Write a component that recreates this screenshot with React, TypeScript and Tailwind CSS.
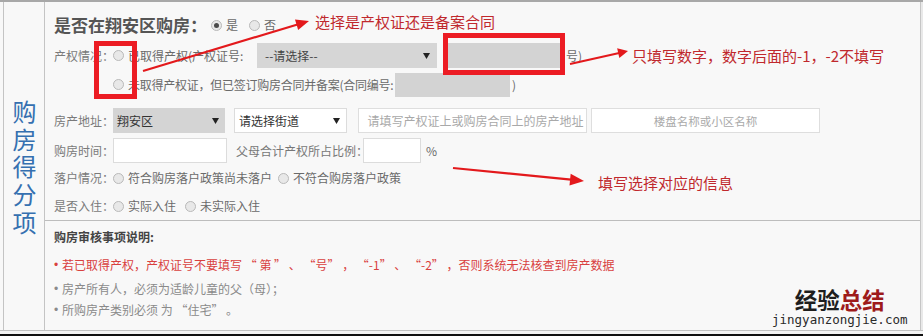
import React from "react";

const Radio = ({ checked = false, className = "" }: { checked?: boolean; className?: string }) => (
  <span
    className={`inline-flex items-center justify-center w-[11px] h-[11px] rounded-full border border-[#b9b9b9] bg-[#e8e8e8] shrink-0 ${className}`}
  >
    {checked && <span className="w-[5px] h-[5px] rounded-full bg-[#4a4a4a]" />}
  </span>
);

const Caret = () => (
  <svg width="7" height="6" viewBox="0 0 7 6" className="shrink-0">
    <polygon points="0,0 7,0 3.5,6" fill="#222" />
  </svg>
);

function arrowHead(x1: number, y1: number, x2: number, y2: number, len: number, wid: number) {
  const dx = x2 - x1;
  const dy = y2 - y1;
  const d = Math.sqrt(dx * dx + dy * dy);
  const ux = dx / d;
  const uy = dy / d;
  const bx = x2 - ux * len;
  const by = y2 - uy * len;
  const px = -uy * (wid / 2);
  const py = ux * (wid / 2);
  return {
    line: { x1, y1, x2: bx + ux * 1, y2: by + uy * 1 },
    points: `${x2},${y2} ${bx + px},${by + py} ${bx - px},${by - py}`,
  };
}

const Arrow = ({ x1, y1, x2, y2, len, wid, sw }: { x1: number; y1: number; x2: number; y2: number; len: number; wid: number; sw: number }) => {
  const a = arrowHead(x1, y1, x2, y2, len, wid);
  return (
    <g>
      <line x1={a.line.x1} y1={a.line.y1} x2={a.line.x2} y2={a.line.y2} stroke="#e3191c" strokeWidth={sw} />
      <polygon points={a.points} fill="#e3191c" />
    </g>
  );
};

const label = "w-[59px] shrink-0 text-[12px] leading-[18px] text-[#7a7a7a] whitespace-nowrap";
const opt = "shrink-0 text-[12px] leading-[18px] text-[#6a6a6a] whitespace-nowrap";

const Bullet = () => (
  <span className="shrink-0 w-[8px] font-[family-name:'Liberation_Sans',sans-serif]">•</span>
);

export default function App() {
  return (
    <div className="relative w-[923px] h-[336px] flex flex-col bg-[#f8f8f8] overflow-hidden font-[family-name:'Noto_Sans_CJK_SC','Noto_Sans',sans-serif]">
      <div className="h-[2px] bg-[#a8a8a8] shrink-0" />
      <div className="h-[328px] flex shrink-0">
        <div className="w-[3px] shrink-0" />
        <div className="w-[42px] shrink-0 border-l border-r border-[#c4c4c4] flex items-center justify-center pt-[6px]">
          <span className="[writing-mode:vertical-rl] text-[24px] leading-[24px] tracking-[3.6px] text-[#3570b0]">购房得分项</span>
        </div>
        <div className="flex-1 flex flex-col">
          <div className="pl-[9px] flex flex-col">
            {/* row 1 */}
            <div className="mt-[11px] h-[24px] flex items-center">
              <span className="text-[17px] leading-[24px] font-bold text-[#555] whitespace-nowrap">是否在翔安区购房：</span>
              <Radio checked className="ml-[4px]" />
              <span className={`${opt} ml-[4px]`}>是</span>
              <Radio className="ml-[11px]" />
              <span className={`${opt} ml-[4px]`}>否</span>
            </div>
            {/* row 2 */}
            <div className="mt-[6px] h-[25px] flex items-center">
              <span className={label}>产权情况：</span>
              <Radio />
              <span className={`${opt} ml-[4px] w-[129px]`}>已取得产权(产权证号:</span>
              <div className="w-[180px] h-[25px] bg-[#d6d6d6] flex items-center justify-between pl-[8px] pr-[7px]">
                <span className="text-[12px] leading-[18px] text-[#444]">--请选择--</span>
                <Caret />
              </div>
              <div className="ml-[8px] w-[115px] h-[25px] bg-[#d3d3d3]" />
              <span className={`${opt} ml-[6px]`}>号)</span>
            </div>
            {/* row 3 */}
            <div className="mt-[4px] h-[25px] flex items-center pl-[59px]">
              <Radio />
              <span className={`${opt} ml-[4px] w-[267px] tracking-[-0.25px]`}>未取得产权证，但已签订购房合同并备案(合同编号:</span>
              <div className="w-[115px] h-[24px] bg-[#d3d3d3]" />
              <span className={`${opt} ml-[2px]`}>)</span>
            </div>
            {/* row 4 */}
            <div className="mt-[11px] h-[25px] flex items-center">
              <span className={label}>房产地址：</span>
              <div className="w-[112px] h-[25px] bg-[#d4d4d4] flex items-center justify-between pl-[4px] pr-[6px]">
                <span className="text-[12px] leading-[18px] text-[#333]">翔安区</span>
                <Caret />
              </div>
              <div className="ml-[9px] w-[113px] h-[25px] bg-white border border-[#dcdcdc] flex items-center justify-between pl-[4px] pr-[6px]">
                <span className="text-[12px] leading-[18px] text-[#333]">请选择街道</span>
                <Caret />
              </div>
              <div className="ml-[11px] w-[229px] h-[25px] bg-white border border-[#dedede] flex items-center justify-center pl-[6px]">
                <span className="text-[12px] leading-[18px] text-[#a9a9a9] whitespace-nowrap">请填写产权证上或购房合同上的房产地址</span>
              </div>
              <div className="ml-[4px] w-[229px] h-[25px] bg-white border border-[#dedede] flex items-center justify-center">
                <span className="text-[11.5px] leading-[18px] text-[#a9a9a9] whitespace-nowrap">楼盘名称或小区名称</span>
              </div>
            </div>
            {/* row 5 */}
            <div className="mt-[5px] h-[25px] flex items-center">
              <span className={label}>购房时间：</span>
              <div className="w-[114px] h-[25px] bg-white border border-[#dcdcdc]" />
              <span className={`${opt} ml-[9px] w-[127px] text-[11.5px] text-[#777]`}>父母合计产权所占比例：</span>
              <div className="w-[58px] h-[25px] bg-white border border-[#dcdcdc]" />
              <span className={`${opt} ml-[5px]`}>%</span>
            </div>
            {/* row 6 */}
            <div className="mt-[5px] h-[20px] flex items-center">
              <span className={label}>落户情况：</span>
              <Radio />
              <span className={`${opt} ml-[4px]`}>符合购房落户政策尚未落户</span>
              <Radio className="ml-[6px]" />
              <span className={`${opt} ml-[4px]`}>不符合购房落户政策</span>
            </div>
            {/* row 7 */}
            <div className="mt-[8px] h-[20px] flex items-center">
              <span className={label}>是否入住：</span>
              <Radio />
              <span className={`${opt} ml-[4px]`}>实际入住</span>
              <Radio className="ml-[9px]" />
              <span className={`${opt} ml-[4px]`}>未实际入住</span>
            </div>
          </div>
          <div className="mt-[4px] h-px bg-[#bdbdbd]" />
          <div className="pl-[9px] pt-[7px] flex flex-col">
            <span className="text-[12px] leading-[18px] font-bold text-[#444]">购房审核事项说明:</span>
            <div className="mt-[10px] flex text-[12px] leading-[18px] text-[#d9413f] whitespace-nowrap">
              <Bullet />
              <span>若已取得产权，产权证号不要填写 “ 第 ” 、 “号” ， “-1” 、 “-2” ，否则系统无法核查到房产数据</span>
            </div>
            <div className="mt-[6px] flex text-[12px] leading-[18px] text-[#8a8a8a] whitespace-nowrap">
              <Bullet />
              <span>房产所有人，必须为适龄儿童的父（母）；</span>
            </div>
            <div className="mt-[3px] flex text-[12px] leading-[18px] text-[#8a8a8a] whitespace-nowrap">
              <Bullet />
              <span>所购房产类别必须 为 “住宅” 。</span>
            </div>
          </div>
        </div>
        <div className="w-[3px] shrink-0 border-l border-[#c6c6c6] bg-[#e9e9e9]" />
      </div>
      <div className="h-px bg-[#c2c2c2] shrink-0" />
      <div className="h-[3px] bg-[#f4f4f4] shrink-0" />
      <div className="h-[2px] bg-[#111] shrink-0" />

      {/* annotations overlay */}
      <span className="absolute left-[315px] top-[12px] text-[15px] leading-[20px] text-[#c0282d] whitespace-nowrap">选择是产权证还是备案合同</span>
      <span className="absolute left-[632px] top-[46px] text-[15px] leading-[20px] text-[#c0282d] whitespace-nowrap">只填写数字，数字后面的-1，-2不填写</span>
      <span className="absolute left-[598px] top-[173px] text-[15px] leading-[20px] text-[#c0282d] whitespace-nowrap">填写选择对应的信息</span>
      <svg className="absolute left-0 top-0 pointer-events-none" width="923" height="336" viewBox="0 0 923 336">
        <rect x="96.5" y="43.5" width="38" height="53" fill="none" stroke="#ec1c24" strokeWidth="5" />
        <rect x="445.5" y="35.5" width="117" height="37" fill="none" stroke="#ec1c24" strokeWidth="5" />
        <Arrow x1={143} y1={71} x2={309} y2={21} len={13} wid={11} sw={2.2} />
        <Arrow x1={570} y1={64} x2={628} y2={51} len={10} wid={10} sw={2} />
        <Arrow x1={453} y1={168} x2={584} y2={181} len={14} wid={12} sw={2.2} />
      </svg>

      {/* watermark */}
      <div className="absolute left-[772px] top-[288px] flex flex-col items-center">
        <span className="block h-[22px] text-[22.5px] leading-[22px] font-bold whitespace-nowrap">
          <span className="text-[#1e1e1e]">经验</span>
          <span className="text-[#9e1b1b]">总结</span>
        </span>
        <span className="mt-[4px] block text-[12.5px] leading-[11px] text-[#2a2a2a] font-[family-name:'DejaVu_Sans_Mono',monospace] whitespace-nowrap">jingyanzongjie.com</span>
      </div>
    </div>
  );
}
